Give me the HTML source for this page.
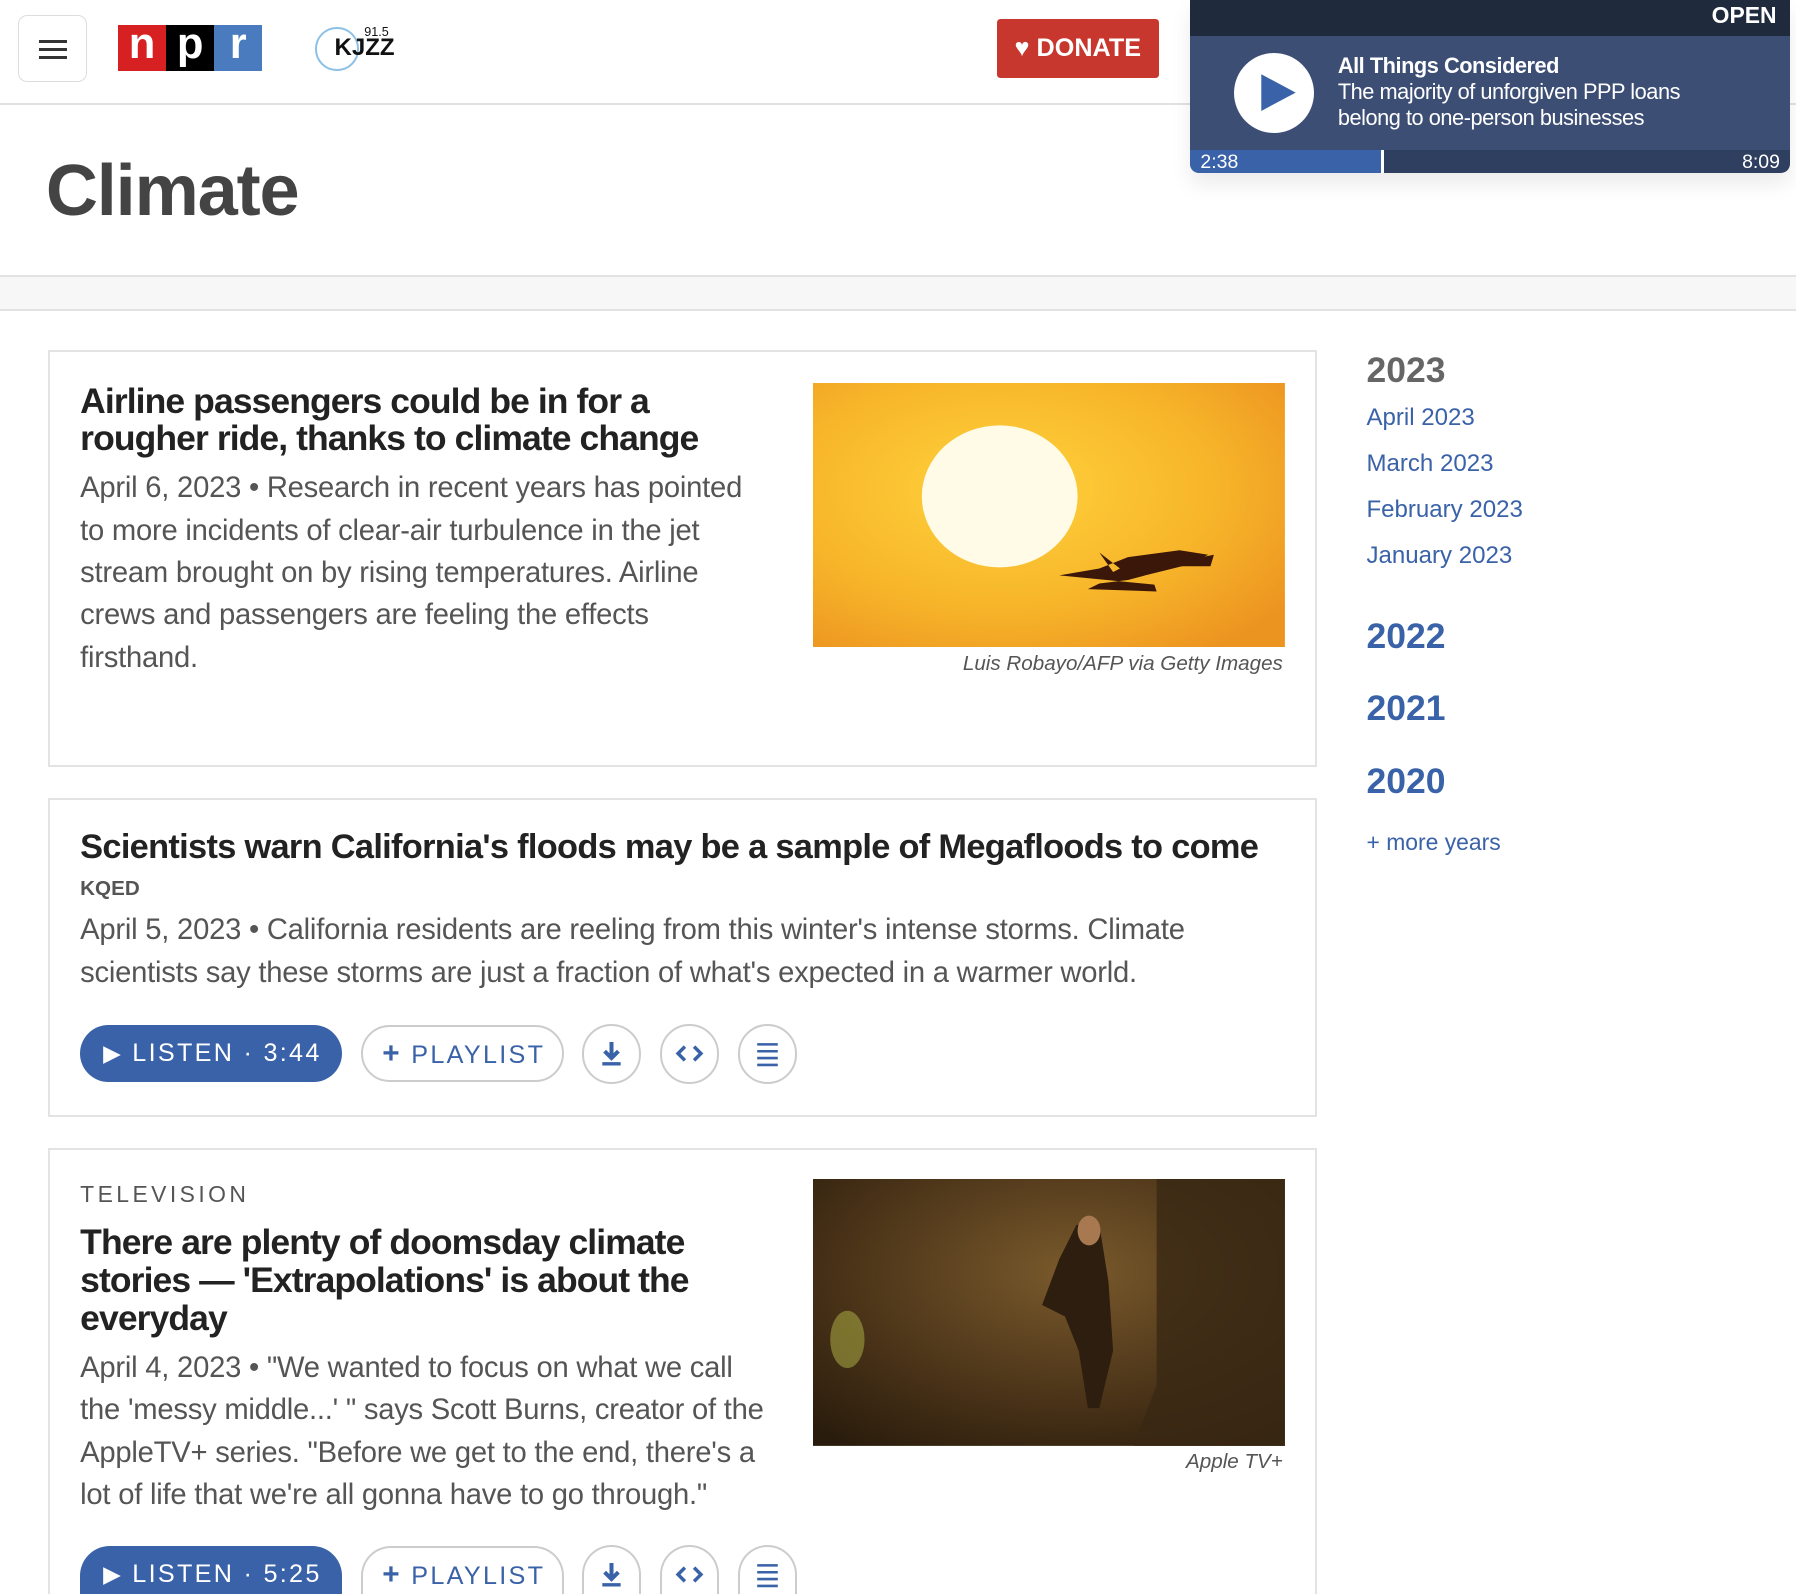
<!DOCTYPE html>
<html><head><meta charset="utf-8"><style>
html{zoom:1.14541;overflow:hidden}
body{margin:0;background:#fff;font-family:"Liberation Sans",sans-serif;overflow:hidden;height:1392px}
#w{width:1568px;height:1392px;overflow:hidden;position:relative}
.a{position:absolute}
.hdr{left:0;top:0;width:1568px;height:90px;border-bottom:2px solid #e2e2e2}
.ham{left:16px;top:13px;width:58px;height:57px;border:1.5px solid #ddd;border-radius:8px}
.ham i{position:absolute;left:17px;width:25px;height:3px;background:#333}
.npr{left:103px;top:22px;height:40px;display:flex}
.npr span{width:42px;height:40px;color:#fff;font-size:38px;font-weight:bold;text-align:center;line-height:34px}
.don{left:870px;top:17px;width:142px;height:51px;background:#c8372d;border-radius:3px;color:#fff;font-weight:bold;font-size:22px;line-height:51px;text-align:center}
.pl{left:1039px;top:0;width:524px;height:151px;border-radius:0 0 8px 8px;overflow:hidden;box-shadow:0 10px 18px rgba(0,0,0,.08)}
.card{border:2px solid #e3e3e3;left:42px;width:1104px;box-sizing:content-box}
.t{font-weight:bold;color:#222;font-size:31px;line-height:33px;letter-spacing:-.8px}
.p{color:#555;font-size:25.5px;line-height:37px;letter-spacing:-.2px}
.cap{font-style:italic;color:#555;font-size:18px;text-align:right}
.btn{height:50px;border-radius:26px;box-sizing:border-box;font-size:22px;letter-spacing:2px;line-height:50px}
.lis{background:#3a62a8;color:#fff;width:229px}
.ply{border:2px solid #ccc;color:#3a62a8;width:177px;padding-left:17px;line-height:47px}
.cir{width:52px;height:52px;border:2px solid #ccc;border-radius:50%;box-sizing:border-box}
.side{left:1193px;color:#3a62a8}
.yr{font-size:31px;font-weight:bold}
.mo{font-size:21px}
</style></head><body><div id="w">
<div class="a hdr"></div>
<div class="a ham"><i style="top:21px"></i><i style="top:28px"></i><i style="top:35px"></i></div>
<div class="a npr"><span style="background:#d62021">n</span><span style="background:#000">p</span><span style="background:#4a7bbf">r</span></div>
<div class="a" style="left:275px;top:24px;width:38px;height:38px;border-radius:50%;border:2px solid #8cc0e6;box-sizing:border-box"></div>
<div class="a" style="left:292px;top:30px;font-size:21px;font-weight:bold;color:#111">KJZZ</div>
<div class="a" style="left:318px;top:22px;font-size:11px;color:#111">91.5</div>
<div class="a don"><span style="font-size:22px">♥</span> DONATE</div>
<div class="a pl">
 <div class="a" style="left:0;top:0;width:524px;height:31px;background:#1f2a3c"></div>
 <div class="a" style="right:12px;top:2px;color:#fff;font-weight:bold;font-size:20px">OPEN</div>
 <div class="a" style="left:0;top:31px;width:524px;height:100px;background:#3d4e75"></div>
 <div class="a" style="left:38px;top:46px;width:70px;height:70px;border-radius:50%;background:#fff"></div>
 <svg class="a" style="left:60px;top:63px" width="34" height="36"><path d="M2 2 L32 18 L2 34Z" fill="#3a62a8"/></svg>
 <div class="a" style="left:129px;top:46px;color:#fff;font-size:19px;line-height:23px;letter-spacing:-.4px"><b>All Things Considered</b><br>The majority of unforgiven PPP loans<br>belong to one-person businesses</div>
 <div class="a" style="left:0;top:131px;width:524px;height:20px;background:#2f3f60"></div>
 <div class="a" style="left:0;top:131px;width:167px;height:20px;background:#3a62a8;border-right:3px solid #fff"></div>
 <div class="a" style="left:9px;top:132px;color:#fff;font-size:17px">2:38</div>
 <div class="a" style="right:9px;top:132px;color:#fff;font-size:17px">8:09</div>
</div>
<div class="a" style="left:40px;top:131px;font-size:63px;font-weight:bold;color:#444;letter-spacing:-1px">Climate</div>
<div class="a" style="left:0;top:240px;width:1568px;height:28px;background:#f7f7f7;border-top:2px solid #e2e2e2;border-bottom:2px solid #e2e2e2"></div>

<div class="a card" style="top:306px;height:360px"></div>
<div class="a t" style="left:70px;top:334px;width:600px">Airline passengers could be in for a rougher ride, thanks to climate change</div>
<div class="a p" style="left:70px;top:408px;width:600px">April 6, 2023 • Research in recent years has pointed to more incidents of clear-air turbulence in the jet stream brought on by rising temperatures. Airline crews and passengers are feeling the effects firsthand.</div>
<svg class="a" style="left:710px;top:334px" width="412" height="231">
 <defs><radialGradient id="g1" cx="40%" cy="40%" r="75%"><stop offset="0" stop-color="#ffd23c"/><stop offset=".6" stop-color="#f7b52a"/><stop offset="1" stop-color="#ec9420"/></radialGradient></defs>
 <rect width="412" height="231" fill="url(#g1)"/>
 <ellipse cx="163" cy="99" rx="68" ry="62" fill="#fffbe6"/>
 <path d="M215 168 L250 162 L275 152 L320 146 L345 150 L330 158 L290 168 L275 172 L250 175 L240 180 L300 182 L298 176 Z M250 148 L262 165 L268 162 Z" fill="#3a1708"/>
 <path d="M300 160 L350 150 L347 160 Z" fill="#3a1708"/>
</svg>
<div class="a cap" style="left:710px;top:569px;width:410px">Luis Robayo/AFP via Getty Images</div>

<div class="a card" style="top:697px;height:275px"></div>
<div class="a t" style="left:70px;top:724px;width:1080px;font-size:30px;letter-spacing:-.6px;white-space:nowrap">Scientists warn California's floods may be a sample of Megafloods to come</div>
<div class="a" style="left:70px;top:766px;font-size:18px;font-weight:bold;color:#555">KQED</div>
<div class="a p" style="left:70px;top:794px;width:1070px">April 5, 2023 • California residents are reeling from this winter's intense storms. Climate scientists say these storms are just a fraction of what's expected in a warmer world.</div>
<div class="a btn lis" style="left:70px;top:895px"><span style="margin-left:20px;font-size:20px">▶</span> LISTEN · 3:44</div>
<div class="a btn ply" style="left:315px;top:895px"><b style="font-size:26px">+</b> PLAYLIST</div>
<div class="a cir" style="left:508px;top:894px"><svg width="48" height="48"><path d="M24 14v14M18 22l6 6 6-6" stroke="#3a62a8" stroke-width="3.5" fill="none"/><path d="M16 33h16" stroke="#3a62a8" stroke-width="3"/></svg></div>
<div class="a cir" style="left:576px;top:894px"><svg width="48" height="48"><path d="M20 18l-6 6 6 6M28 18l6 6-6 6" stroke="#3a62a8" stroke-width="3" fill="none"/></svg></div>
<div class="a cir" style="left:644px;top:894px"><svg width="48" height="48"><path d="M15 16h18M15 22h18M15 28h18M15 34h18" stroke="#3a62a8" stroke-width="2.2"/></svg></div>

<div class="a card" style="top:1002px;height:388px;border-bottom:none"></div>
<div class="a" style="left:70px;top:1031px;font-size:20px;letter-spacing:3px;color:#555">TELEVISION</div>
<div class="a t" style="left:70px;top:1069px;width:600px">There are plenty of doomsday climate stories — 'Extrapolations' is about the everyday</div>
<div class="a p" style="left:70px;top:1176px;width:610px">April 4, 2023 • "We wanted to focus on what we call the 'messy middle...' " says Scott Burns, creator of the AppleTV+ series. "Before we get to the end, there's a lot of life that we're all gonna have to go through."</div>
<svg class="a" style="left:710px;top:1029px" width="412" height="233">
 <defs><radialGradient id="g2" cx="55%" cy="35%" r="80%"><stop offset="0" stop-color="#7a5a2c"/><stop offset=".6" stop-color="#4a3318"/><stop offset="1" stop-color="#2a1c0c"/></radialGradient></defs>
 <rect width="412" height="233" fill="url(#g2)"/>
 <path d="M300 0 L412 0 L412 233 L280 233 L300 180 Z" fill="#3a2814" opacity=".8"/>
 <path d="M230 40 L250 40 L258 90 L262 150 L250 200 L240 200 L232 150 L220 120 L200 110 L215 70 Z" fill="#2e1e10"/>
 <ellipse cx="241" cy="45" rx="10" ry="13" fill="#a87850"/>
 <ellipse cx="30" cy="140" rx="15" ry="25" fill="#a0a040" opacity=".6"/>
</svg>
<div class="a cap" style="left:710px;top:1266px;width:410px">Apple TV+</div>
<div class="a btn lis" style="left:70px;top:1350px;height:42px;border-radius:26px 26px 0 0;line-height:50px;overflow:hidden"><span style="margin-left:20px;font-size:20px">▶</span> LISTEN · 5:25</div>
<div class="a btn ply" style="left:315px;top:1350px;height:42px;border-bottom:none;border-radius:26px 26px 0 0;overflow:hidden"><b style="font-size:26px">+</b> PLAYLIST</div>
<div class="a cir" style="left:508px;top:1349px;height:43px;border-bottom:none;border-radius:26px 26px 0 0;overflow:hidden"><svg width="48" height="48"><path d="M24 14v14M18 22l6 6 6-6" stroke="#3a62a8" stroke-width="3.5" fill="none"/><path d="M16 33h16" stroke="#3a62a8" stroke-width="3"/></svg></div>
<div class="a cir" style="left:576px;top:1349px;height:43px;border-bottom:none;border-radius:26px 26px 0 0;overflow:hidden"><svg width="48" height="48"><path d="M20 18l-6 6 6 6M28 18l6 6-6 6" stroke="#3a62a8" stroke-width="3" fill="none"/></svg></div>
<div class="a cir" style="left:644px;top:1349px;height:43px;border-bottom:none;border-radius:26px 26px 0 0;overflow:hidden"><svg width="48" height="48"><path d="M15 16h18M15 22h18M15 28h18M15 34h18" stroke="#3a62a8" stroke-width="2.2"/></svg></div>

<div class="a side yr" style="top:306px;color:#666">2023</div>
<div class="a side mo" style="top:353px">April 2023</div>
<div class="a side mo" style="top:393px">March 2023</div>
<div class="a side mo" style="top:433px">February 2023</div>
<div class="a side mo" style="top:473px">January 2023</div>
<div class="a side yr" style="top:538px">2022</div>
<div class="a side yr" style="top:601px">2021</div>
<div class="a side yr" style="top:664px">2020</div>
<div class="a side" style="top:724px;font-size:20px">+ more years</div>
</div></body></html>
